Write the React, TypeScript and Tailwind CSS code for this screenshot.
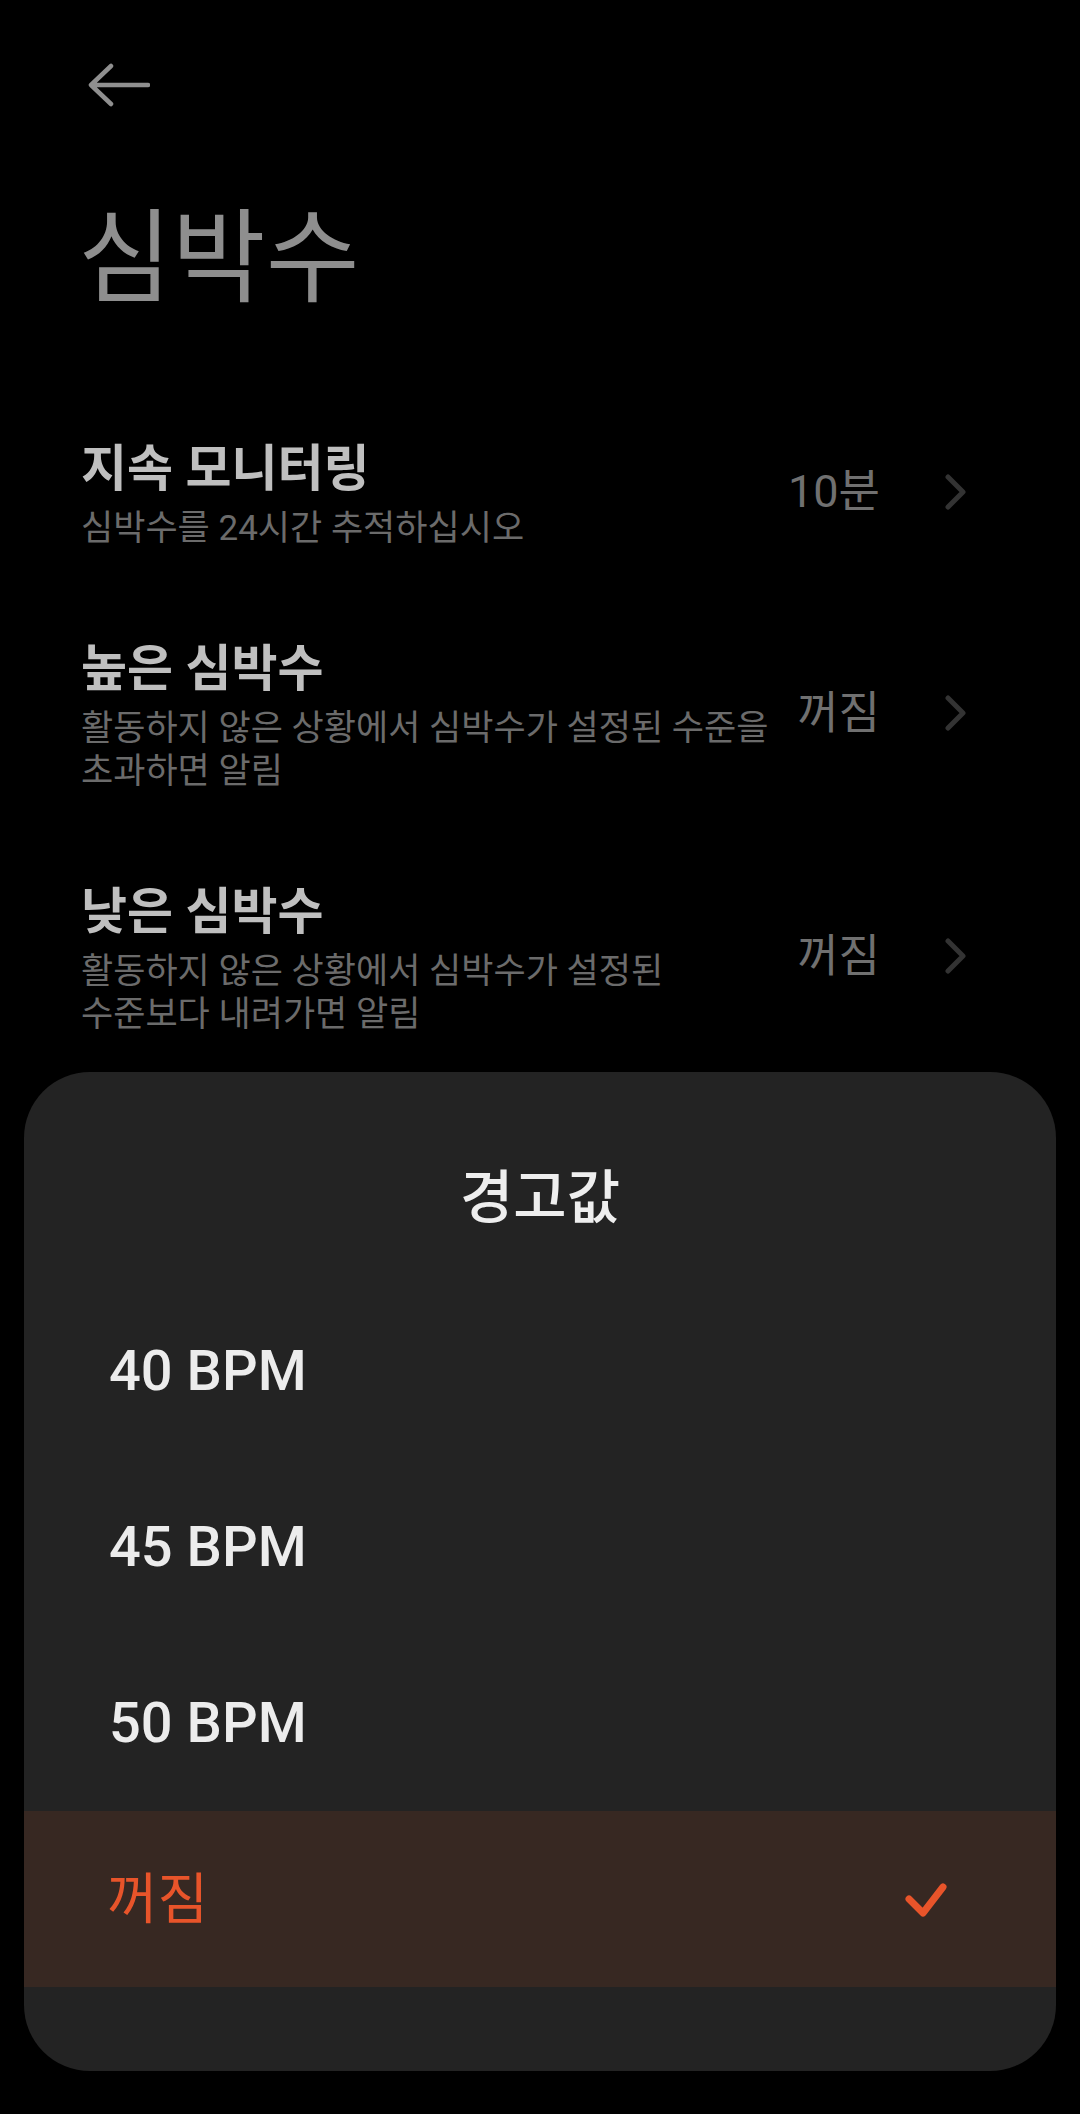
import React from 'react';

const FONT = "font-['Roboto','Noto_Sans_CJK_KR',sans-serif]";

interface SettingRowProps {
  title: string;
  lines: string[];
  value: string;
}

const Chevron = () => (
  <svg width="24" height="36" viewBox="0 0 24 36" fill="none" className="shrink-0">
    <polyline points="4,3 19,18 4,33" stroke="#333333" strokeWidth={5} strokeLinecap="round" strokeLinejoin="round" />
  </svg>
);

const SettingRow: React.FC<SettingRowProps> = ({ title, lines, value }) => (
  <div className="flex items-center pl-[81px] pr-[112px]">
    <div className="flex-1 min-w-0">
      <div className="text-[50px] leading-[56px] font-bold text-[#bfbfbf]">{title}</div>
      <div className="mt-[10px] text-[35px] leading-[43px] text-[#6b6b6b]">
        {lines.map((line) => (
          <div key={line} className="whitespace-nowrap">{line}</div>
        ))}
      </div>
    </div>
    <div className="flex items-center gap-[64px] mb-[8px]">
      <span className="text-[45px] leading-none text-[#707070] whitespace-nowrap">{value}</span>
      <Chevron />
    </div>
  </div>
);

const options = ['40 BPM', '45 BPM', '50 BPM'];

export default function App() {
  return (
    <div className={`min-h-[2114px] w-[1080px] bg-black ${FONT} overflow-hidden`}>
      {/* Header */}
      <div className="pt-[63px] pl-[88px]">
        <svg width="62" height="44" viewBox="0 0 62 44" fill="none">
          <path d="M3 22H60M23 3L3 22L23 41" stroke="#8f8f8f" strokeWidth={4.5} strokeLinecap="round" strokeLinejoin="round" />
        </svg>
      </div>
      <h1 className="mt-[101px] pl-[78px] text-[102px] leading-none font-normal text-[#8e8e8e]">심박수</h1>

      {/* Settings */}
      <div className="mt-[131px] flex flex-col gap-[91px]">
        <SettingRow title="지속 모니터링" lines={['심박수를 24시간 추적하십시오']} value="10분" />
        <SettingRow
          title="높은 심박수"
          lines={['활동하지 않은 상황에서 심박수가 설정된 수준을', '초과하면 알림']}
          value="꺼짐"
        />
        <SettingRow
          title="낮은 심박수"
          lines={['활동하지 않은 상황에서 심박수가 설정된', '수준보다 내려가면 알림']}
          value="꺼짐"
        />
      </div>

      {/* Bottom sheet */}
      <div className="mt-[36px] mx-[24px] rounded-[66px] bg-[#232323] overflow-hidden pt-[97px] pb-[84px]">
        <h2 className="text-center text-[58px] leading-none font-medium text-[#eeeeee]">경고값</h2>
        <div className="mt-[56px]">
          {options.map((opt) => (
            <div key={opt} className="h-[176px] flex items-center pl-[85px]">
              <span className="text-[56px] font-medium text-[#ececec]">{opt}</span>
            </div>
          ))}
          <div className="h-[176px] flex items-center justify-between pl-[83px] pr-[106px] bg-[#372822]">
            <span className="text-[55px] leading-none text-[#e8542a]">꺼짐</span>
            <svg width="48" height="40" viewBox="0 0 48 40" fill="none">
              <polyline points="7,20 21,34 41,8" stroke="#e8542a" strokeWidth={7} strokeLinecap="round" strokeLinejoin="round" />
            </svg>
          </div>
        </div>
      </div>
    </div>
  );
}
